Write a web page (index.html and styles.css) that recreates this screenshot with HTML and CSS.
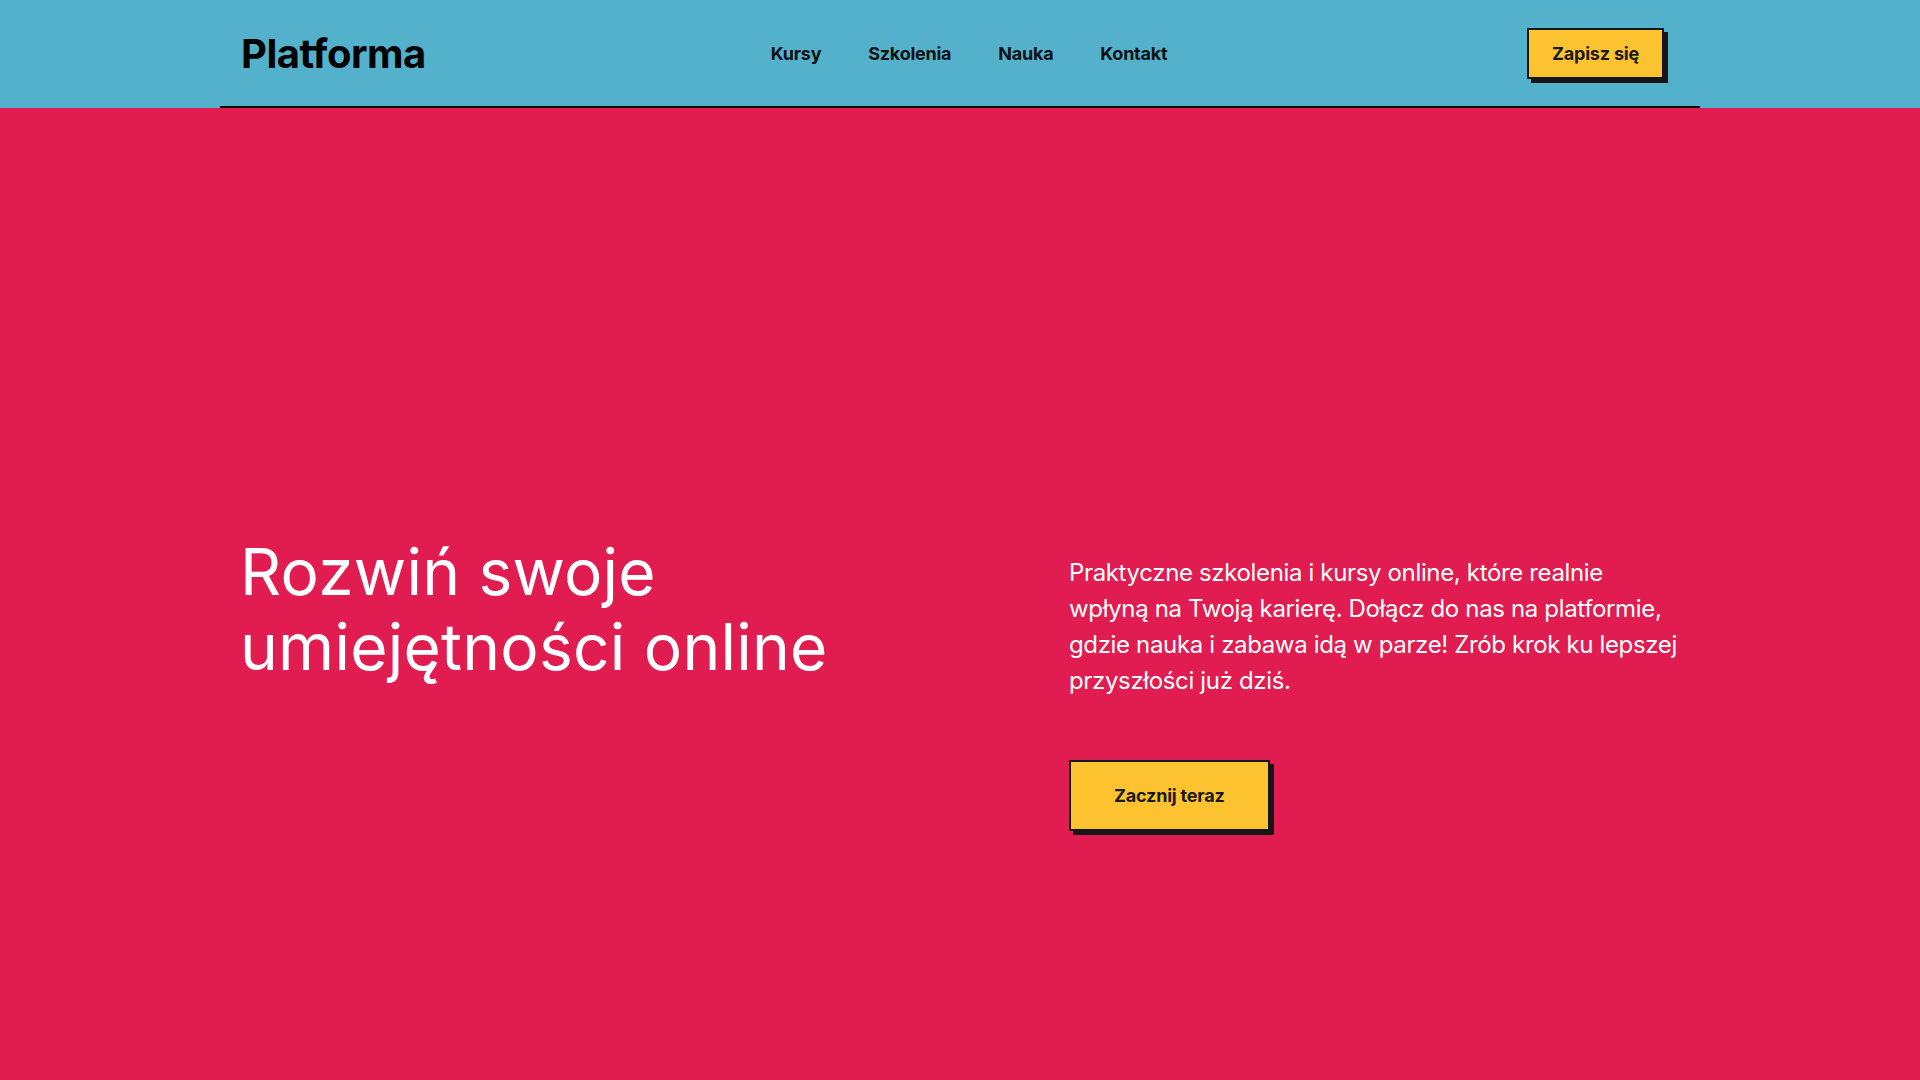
FILE: index.html
```html
<!doctype html>
<html lang="pl">
    <head>
        <meta charset="UTF-8" />
        <meta name="viewport" content="width=device-width, initial-scale=1.0" />
        <title>Platforma</title>
        <link rel="stylesheet" href="styles.css">
    </head>
    <body>
        <header class="site-header">
            <div class="header-inner">
                <a class="logo" href="#">Platforma</a>
                <nav class="main-nav">
                    <a href="#">Kursy</a>
                    <a href="#">Szkolenia</a>
                    <a href="#">Nauka</a>
                    <a href="#">Kontakt</a>
                </nav>
                <div class="header-action">
                    <a class="btn btn-small" href="#">Zapisz się</a>
                </div>
            </div>
        </header>

        <main class="hero">
            <div class="hero-inner">
                <h1 class="hero-title">Rozwiń swoje umiejętności online</h1>
                <div class="hero-side">
                    <p class="hero-text">
                        Praktyczne szkolenia i kursy online, które realnie
                        wpłyną na Twoją karierę. Dołącz do nas na platformie,
                        gdzie nauka i zabawa idą w parze! Zrób krok ku lepszej
                        przyszłości już dziś.
                    </p>
                    <a class="btn btn-large" href="#">Zacznij teraz</a>
                </div>
            </div>
        </main>
    </body>
</html>
```

FILE: styles.css
```css
* {
    box-sizing: border-box;
}

html,
body {
    height: 100%;
}

body {
    margin: 0;
    font-family: Inter, 'Noto Sans', sans-serif;
    background: #e01c50;
    display: flex;
    flex-direction: column;
}

a {
    text-decoration: none;
    color: inherit;
}

.site-header {
    background: #53b1cb;
}

.header-inner {
    max-width: 1480px;
    margin: 0 auto;
    padding: 0 20px;
    height: 108px;
    border-bottom: 2px solid #000;
    display: grid;
    grid-template-columns: 1fr auto 1fr;
    align-items: center;
}

.logo {
    font-size: 40px;
    font-weight: 700;
    color: #000;
    letter-spacing: -0.5px;
    margin-left: 1px;
}

.main-nav {
    display: flex;
    gap: 47px;
    padding-left: 18px;
}

.main-nav a {
    font-size: 18px;
    font-weight: 700;
    color: #111;
    letter-spacing: -0.25px;
}

.header-action {
    display: flex;
    justify-content: flex-end;
    padding-right: 16px;
}

.btn {
    display: inline-block;
    background: #fcc22f;
    border: 2px solid #161616;
    box-shadow: 4px 4px 0 #161616;
    color: #1a1a1a;
    font-weight: 700;
    font-size: 18px;
    line-height: 23px;
    letter-spacing: -0.2px;
}

.btn-small {
    padding: 12px 23px;
}

.btn-large {
    padding: 22px 43px;
}

.hero {
    flex: 1;
}

.hero-inner {
    max-width: 1480px;
    margin: 0 auto;
    padding: 426px 20px 0;
    display: grid;
    grid-template-columns: 829px 1fr;
    align-items: start;
}

.hero-title {
    margin: 0;
    font-size: 64px;
    font-weight: 400;
    line-height: 75px;
    color: #fff;
    max-width: 640px;
    letter-spacing: 0.25px;
}

.hero-side {
    padding-top: 21px;
}

.hero-text {
    margin: 0 0 61px;
    font-size: 24px;
    line-height: 36px;
    color: #fff;
    max-width: 620px;
    letter-spacing: -0.35px;
}
```
